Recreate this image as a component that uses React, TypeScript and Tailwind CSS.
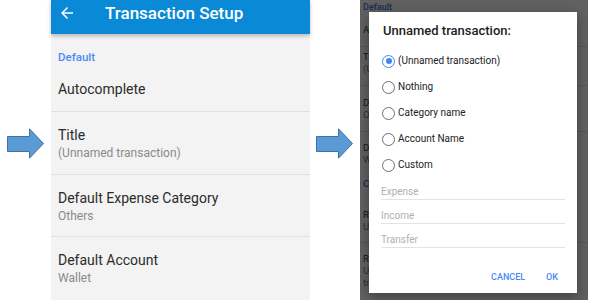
import React from "react";

function BlockArrow() {
  return (
    <svg width="40" height="32" viewBox="0 0 40 32">
      <path
        d="M0.5 8.5 H22.5 V0.8 L36.5 15.5 L22.5 30.2 V23.5 H0.5 Z"
        fill="#5b9bd5"
        stroke="#41719c"
        strokeWidth="1"
      />
    </svg>
  );
}

function Radio({ checked, label }: { checked?: boolean; label: string }) {
  return (
    <div className="flex h-[26px] items-center">
      <div
        className={
          checked
            ? "flex h-[13px] w-[13px] items-center justify-center rounded-full border-[1.5px] border-[#4285f4]"
            : "h-[13px] w-[13px] rounded-full border-[1.5px] border-[#6f6f6f]"
        }
      >
        {checked && <div className="h-[6px] w-[6px] rounded-full bg-[#4285f4]" />}
      </div>
      <span className="ml-[3px] text-[10px] leading-[14px] text-[#222]">{label}</span>
    </div>
  );
}

function Input({ placeholder, first }: { placeholder: string; first?: boolean }) {
  return (
    <div
      className={
        (first ? "pt-[7px] " : "pt-[9px] ") +
        "border-b border-[#e3e3e3] text-[10px] leading-[14px] text-[#b0b0b0]"
      }
    >
      {placeholder}
    </div>
  );
}

function BgRow({ children, border, cls }: { children: React.ReactNode; border?: boolean; cls: string }) {
  return (
    <div className={(border ? "border-b border-[#d8d8d8] " : "") + cls}>
      <div className="w-[9px] overflow-hidden whitespace-nowrap pl-[3px]">{children}</div>
    </div>
  );
}

export default function App() {
  return (
    <div
      className="flex h-[300px] w-[600px] overflow-hidden bg-white"
      style={{ fontFamily: "Roboto, 'Noto Sans', sans-serif" }}
    >
      {/* left arrow */}
      <div className="w-[51px] shrink-0 pl-[7px] pt-[128px]">
        <BlockArrow />
      </div>

      {/* left phone */}
      <div className="flex h-[300px] w-[259px] shrink-0 flex-col bg-[#f3f3f3]">
        <div className="relative z-10 flex h-[34px] shrink-0 items-center bg-[#0a89d6] pb-[9px] pl-[7px] shadow-[0_2px_4px_rgba(0,0,0,0.25)]">
          <svg width="18" height="18" viewBox="0 0 24 24" fill="white">
            <path d="M20 11H7.83l5.59-5.59L12 4l-8 8 8 8 1.41-1.41L7.83 13H20v-2z" />
          </svg>
          <span className="ml-[29px] text-[17px] font-medium leading-[20px] text-white">
            Transaction Setup
          </span>
        </div>
        <div className="px-[7px] pt-[15px] text-[11.5px] font-medium leading-[16px] text-[#4a8af4]">
          Default
        </div>
        <div className="border-b border-[#e0e0e0] px-[7px] pb-[12px] pt-[14px] text-[14px] leading-[20px] text-[#2b2b2b]">
          Autocomplete
        </div>
        <div className="border-b border-[#e0e0e0] px-[7px] pb-[13px] pt-[13px]">
          <div className="text-[14px] leading-[20px] text-[#2b2b2b]">Title</div>
          <div className="text-[12px] leading-[16px] text-[#8a8a8a]">(Unnamed transaction)</div>
        </div>
        <div className="border-b border-[#e0e0e0] px-[7px] pb-[12px] pt-[13px]">
          <div className="text-[14px] leading-[20px] text-[#2b2b2b]">Default Expense Category</div>
          <div className="text-[12px] leading-[16px] text-[#8a8a8a]">Others</div>
        </div>
        <div className="px-[7px] pt-[13px]">
          <div className="text-[14px] leading-[20px] text-[#2b2b2b]">Default Account</div>
          <div className="text-[12px] leading-[16px] text-[#8a8a8a]">Wallet</div>
        </div>
      </div>

      {/* middle arrow */}
      <div className="w-[50px] shrink-0 pl-[6px] pt-[128px]">
        <BlockArrow />
      </div>

      {/* right phone */}
      <div className="relative h-[300px] w-[228px] shrink-0 overflow-hidden bg-[#f3f3f3]">
        <div className="flex flex-col text-[9.5px] leading-[12px] text-[#333]">
          <div className="pl-[3px] pt-[1px] text-[9px] font-medium text-[#3b6fd0]">Default</div>
          <BgRow border cls="pb-[10px] pt-[11px]">Autocomplete</BgRow>
          <BgRow border cls="pb-[10px] pt-[4px]">
            <div>Title</div>
            <div className="text-[#777]">(Unnamed transaction)</div>
          </BgRow>
          <BgRow border cls="pb-[10px] pt-[11px]">
            <div>Default Expense Category</div>
            <div className="text-[#777]">Others</div>
          </BgRow>
          <BgRow cls="pb-[8px] pt-[10px]">
            <div>Default Account</div>
            <div className="text-[#777]">Wallet</div>
          </BgRow>
          <BgRow cls="pt-[4px] font-medium text-[#3b6fd0]">Custom</BgRow>
          <BgRow border cls="pb-[9px] pt-[19px]">
            <div>Remember last category</div>
            <div className="text-[#777]">Use last used category</div>
          </BgRow>
          <BgRow cls="pt-[10px]">
            <div>Remember last account</div>
            <div className="text-[#777]">Use last used account for</div>
            <div className="text-[#777]">transactions</div>
          </BgRow>
        </div>
        <div className="absolute inset-0 bg-black/60" />
        <div className="absolute left-[9px] top-[12px] flex h-[281px] w-[208px] flex-col bg-white px-[12px] shadow-[0_4px_12px_rgba(0,0,0,0.35)]">
          <div className="pl-[2px] pt-[10px] text-[13px] font-medium leading-[18px] text-[#222]">
            Unnamed transaction:
          </div>
          <div className="mt-[8px] flex flex-col pl-[1px]">
            <Radio checked label="(Unnamed transaction)" />
            <Radio label="Nothing" />
            <Radio label="Category name" />
            <Radio label="Account Name" />
            <Radio label="Custom" />
          </div>
          <Input placeholder="Expense" first />
          <Input placeholder="Income" />
          <Input placeholder="Transfer" />
          <div className="mt-[21px] flex justify-end pr-[7px] text-[9px] font-medium leading-[16px] text-[#4a89f3]">
            <span>CANCEL</span>
            <span className="ml-[21px]">OK</span>
          </div>
        </div>
      </div>
    </div>
  );
}
